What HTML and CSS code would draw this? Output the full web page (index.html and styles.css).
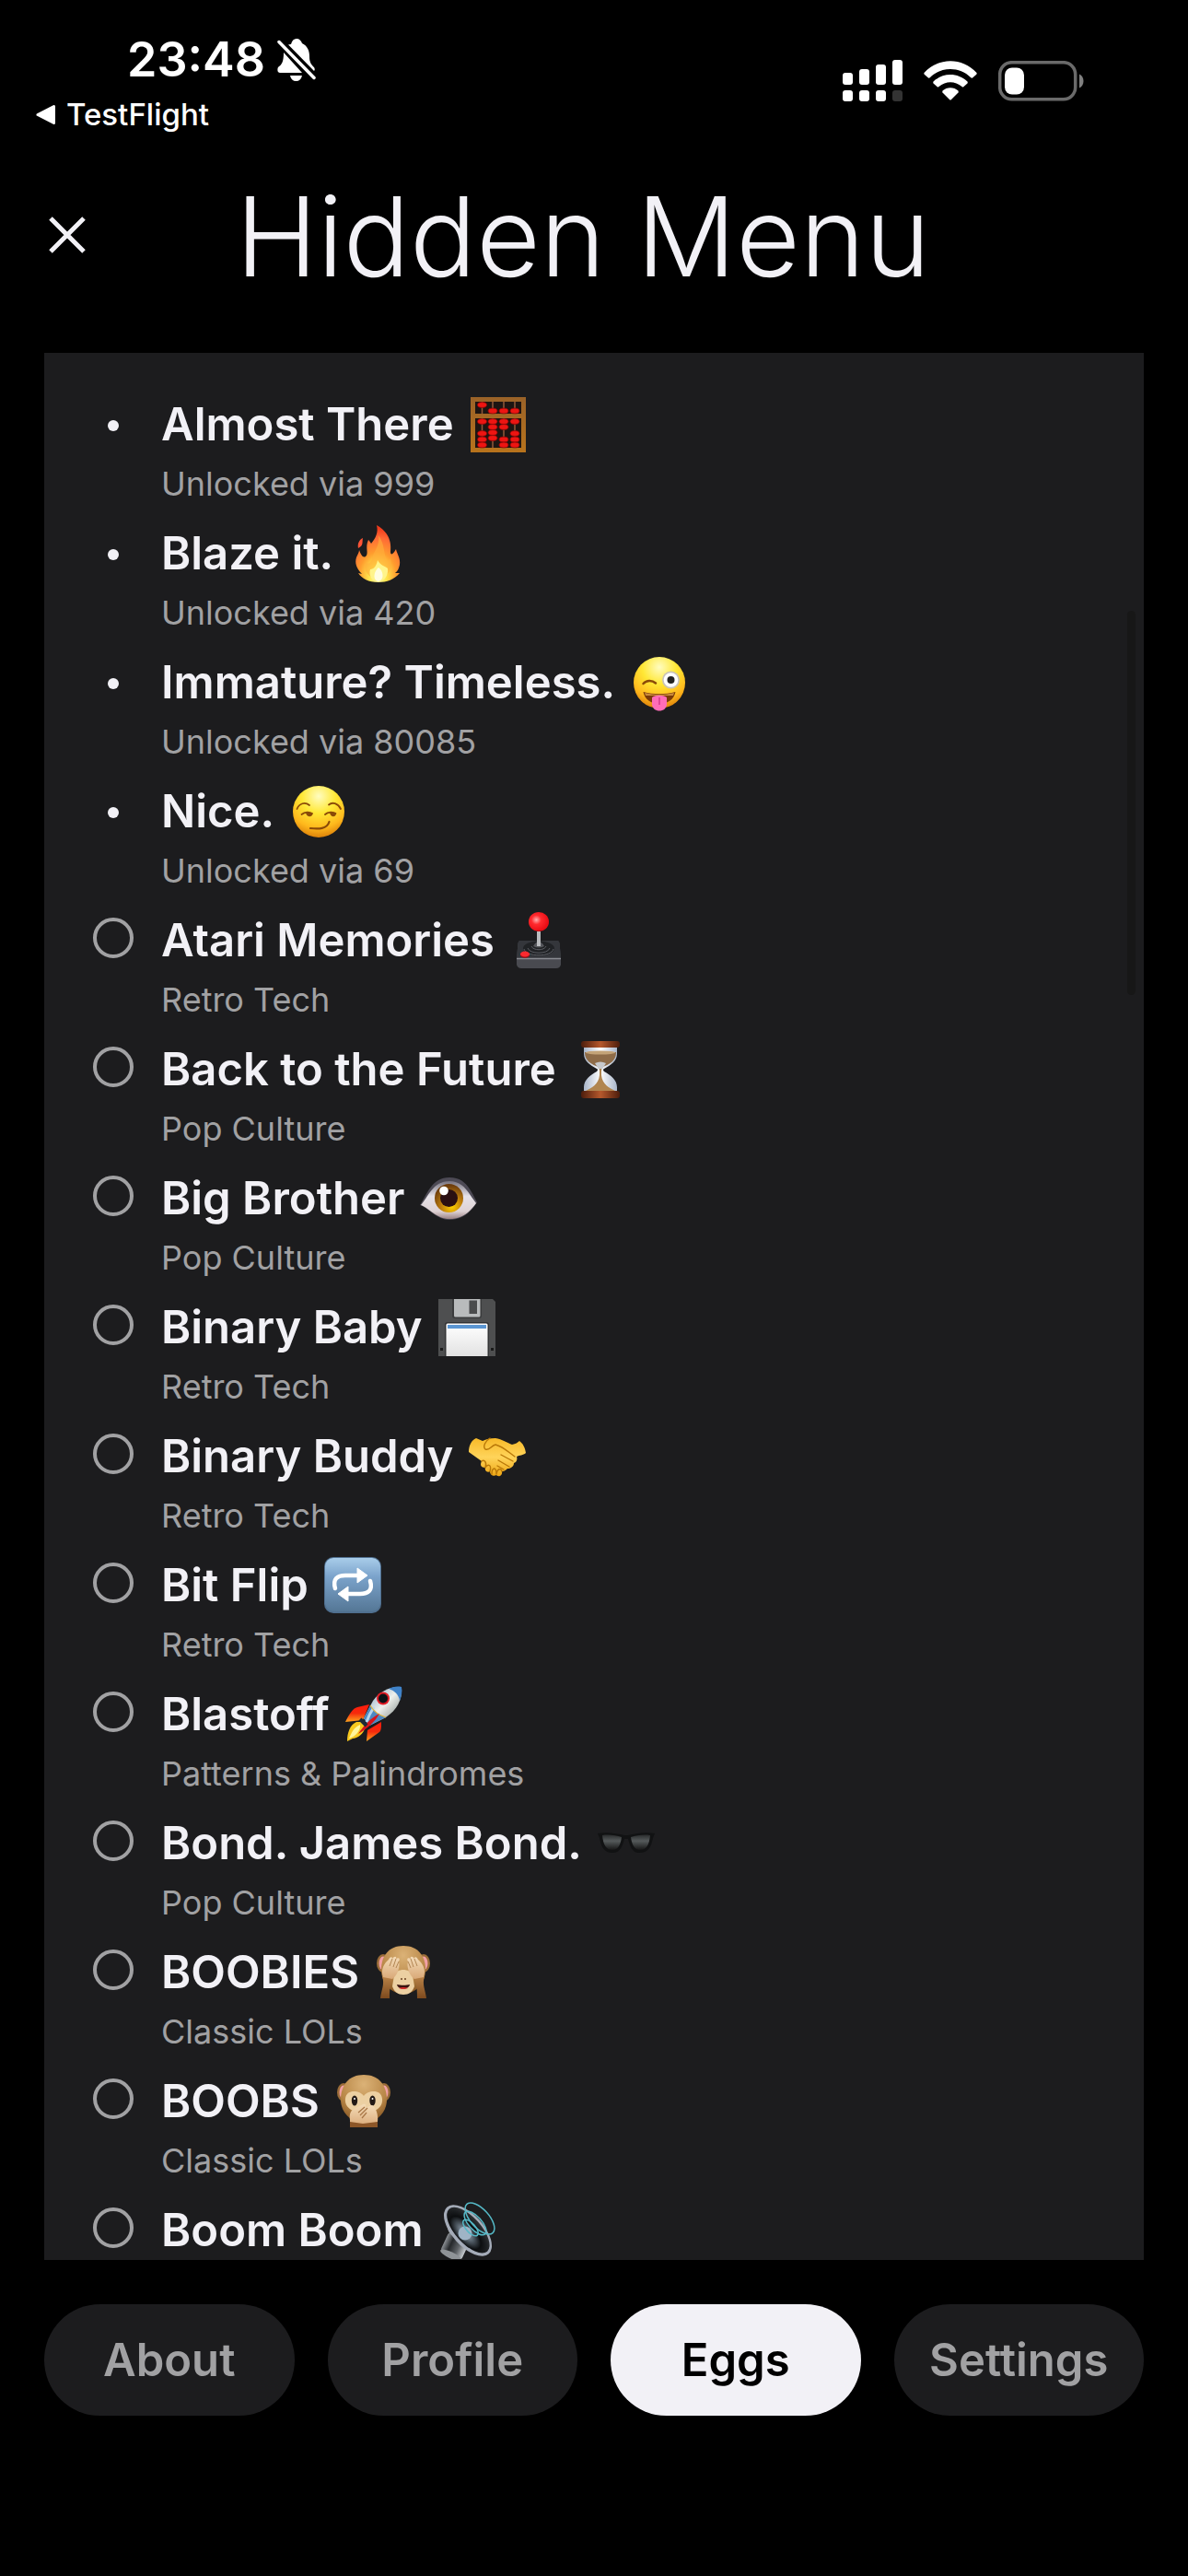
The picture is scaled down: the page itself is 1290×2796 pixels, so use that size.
FILE: index.html
```html
<!DOCTYPE html>
<html lang="en">
<head>
  <meta charset="UTF-8" />
  <meta name="viewport" content="width=device-width, initial-scale=1.0"/>
  <title>Hidden Menu</title>
  <link rel="stylesheet" href="styles.css">
</head>
<body>

  <!-- shared gradients for the emoji drawings -->
  <svg class="defs" width="0" height="0" aria-hidden="true">
    <defs>
      <linearGradient id="wood" x1="0" y1="0" x2="0" y2="1">
        <stop offset="0" stop-color="#9a6228"/><stop offset="1" stop-color="#b8731c"/>
      </linearGradient>
      <radialGradient id="flame" cx="0.5" cy="0.9" r="0.85">
        <stop offset="0" stop-color="#fffbd0"/><stop offset="0.22" stop-color="#ffe94f"/>
        <stop offset="0.5" stop-color="#ff9d2e"/><stop offset="0.8" stop-color="#ff6a35"/><stop offset="1" stop-color="#f03a1c"/>
      </radialGradient>
      <radialGradient id="face" cx="0.5" cy="0.2" r="0.82">
        <stop offset="0" stop-color="#fffcc0"/><stop offset="0.4" stop-color="#ffe836"/>
        <stop offset="0.75" stop-color="#ffb81c"/><stop offset="1" stop-color="#d97c08"/>
      </radialGradient>
      <radialGradient id="ball" cx="0.38" cy="0.4" r="0.6">
        <stop offset="0" stop-color="#ffb0b0"/><stop offset="0.4" stop-color="#ff2a2e"/><stop offset="1" stop-color="#e80c14"/>
      </radialGradient>
      <linearGradient id="cap" x1="0" y1="0" x2="1" y2="0">
        <stop offset="0" stop-color="#4d1d0c"/><stop offset="0.5" stop-color="#b5582c"/><stop offset="1" stop-color="#4d1d0c"/>
      </linearGradient>
      <linearGradient id="glass" x1="0" y1="0" x2="1" y2="0">
        <stop offset="0" stop-color="#a9b6ca"/><stop offset="0.5" stop-color="#ffffff"/><stop offset="1" stop-color="#a9b6ca"/>
      </linearGradient>
      <linearGradient id="sclera" x1="0" y1="0" x2="0" y2="1">
        <stop offset="0" stop-color="#77737f"/><stop offset="0.4" stop-color="#e6e2e8"/><stop offset="0.8" stop-color="#ded2d4"/><stop offset="1" stop-color="#9c8486"/>
      </linearGradient>
      <radialGradient id="iris" cx="0.6" cy="0.8" r="0.75">
        <stop offset="0" stop-color="#ffd000"/><stop offset="0.5" stop-color="#bd7c0c"/><stop offset="1" stop-color="#6d3d0c"/>
      </radialGradient>
      <linearGradient id="paper" x1="0" y1="0" x2="0" y2="1">
        <stop offset="0" stop-color="#ffffff"/><stop offset="1" stop-color="#e2e2e2"/>
      </linearGradient>
      <linearGradient id="skin" x1="0" y1="0" x2="0" y2="1">
        <stop offset="0" stop-color="#f7b928"/><stop offset="0.5" stop-color="#ffd45a"/><stop offset="1" stop-color="#eda514"/>
      </linearGradient>
      <linearGradient id="tile" x1="0" y1="0" x2="0" y2="1">
        <stop offset="0" stop-color="#a9cdea"/><stop offset="0.35" stop-color="#7ba3cb"/><stop offset="1" stop-color="#557796"/>
      </linearGradient>
      <linearGradient id="hull" x1="0" y1="0" x2="1" y2="1">
        <stop offset="0.2" stop-color="#9fb9d0"/><stop offset="0.5" stop-color="#eef0ec"/><stop offset="0.85" stop-color="#8d9693"/>
      </linearGradient>
      <linearGradient id="fin" x1="0" y1="0" x2="0" y2="1">
        <stop offset="0" stop-color="#ff1a0c"/><stop offset="0.5" stop-color="#f52a0c"/><stop offset="1" stop-color="#ffa51e"/>
      </linearGradient>
      <linearGradient id="lens" x1="0" y1="0" x2="0" y2="1">
        <stop offset="0" stop-color="#2b2d2e"/><stop offset="0.4" stop-color="#555a5b"/><stop offset="1" stop-color="#161616"/>
      </linearGradient>
      <radialGradient id="fur" cx="0.5" cy="0.2" r="0.85">
        <stop offset="0" stop-color="#dbb277"/><stop offset="0.6" stop-color="#b98848"/><stop offset="1" stop-color="#80501f"/>
      </radialGradient>
      <linearGradient id="paw" x1="0" y1="0" x2="0" y2="1">
        <stop offset="0" stop-color="#f4dcb8"/><stop offset="1" stop-color="#d9a877"/>
      </linearGradient>
      <linearGradient id="arm" x1="0" y1="0" x2="0" y2="1">
        <stop offset="0" stop-color="#b98348"/><stop offset="1" stop-color="#7d4a1e"/>
      </linearGradient>
      <linearGradient id="metal" x1="0" y1="0" x2="1" y2="0">
        <stop offset="0" stop-color="#8b8f94"/><stop offset="0.3" stop-color="#25282b"/><stop offset="0.65" stop-color="#5d6165"/><stop offset="1" stop-color="#c7cbcf"/>
      </linearGradient>
      <radialGradient id="cone" cx="0.5" cy="0.65" r="0.6">
        <stop offset="0" stop-color="#a9bccd"/><stop offset="0.35" stop-color="#4a545d"/><stop offset="0.6" stop-color="#0c0e10"/><stop offset="1" stop-color="#2a2d30"/>
      </radialGradient>
    </defs>
  </svg>

  <div class="app">

    <div class="status-bar">
      <div class="status-left">
        <div class="clock">
          <span>23:48</span>
          <svg class="bell" viewBox="0 0 42 46" role="img" aria-label="Silent mode">
            <path fill="#fff" d="M15 6C16 2 18 0 21 0C24 0 26 2 27 5C33 8 35 13 35 19C35 26 37 28 40 31C41 33 41 34 40 35L12 6.500Z"/>
            <path fill="#fff" d="M7 15L27 37H3C0 37 0 33 1 31C5 28 7 25 7 15Z"/>
            <path fill="#fff" d="M14 40H27C26 44 24 46 20.500 46C17 46 15 44 14 40Z"/>
            <path d="M1.500 3L40.500 43" stroke="#000" stroke-width="7"/>
            <path d="M2 3.500L40 42.500" stroke="#fff" stroke-width="3.500" stroke-linecap="round"/>
          </svg>
        </div>
        <a class="back" href="#">
          <svg class="back-arrow" viewBox="0 0 21 23" aria-hidden="true">
            <path fill="#fff" stroke="#fff" stroke-width="3" stroke-linejoin="round" d="M2 11.500L19.500 2.500V20.500Z"/>
          </svg>
          <span>TestFlight</span>
        </a>
      </div>
      <div class="status-right">
        <svg class="signal" viewBox="0 0 65 45" role="img" aria-label="Signal">
          <g fill="#fff">
            <rect x="0" y="14" width="11" height="13" rx="3"/>
            <rect x="18" y="10" width="11" height="17" rx="3"/>
            <rect x="36" y="5" width="11" height="22" rx="3"/>
            <rect x="54" y="0" width="11" height="27" rx="3"/>
            <rect x="0" y="33" width="11" height="12" rx="3"/>
            <rect x="18" y="33" width="11" height="12" rx="3"/>
            <rect x="36" y="33" width="11" height="12" rx="3"/>
          </g>
          <rect x="54" y="33" width="11" height="12" rx="3" fill="#333"/>
        </svg>
        <svg class="wifi" viewBox="0 0 58 43" role="img" aria-label="Wi-Fi">
          <g fill="#fff">
            <path d="M0.500 13C16 -4 42 -4 57.500 13Q58 14 57 15L53 18.500Q52 19 51 18C39 6 19 6 7 18Q6 19 5 18.500L1 15Q0 14 0.500 13Z"/>
            <path d="M10.500 22.500C21 12.500 37 12.500 47.500 22.500Q48 23.500 47.500 24.500L43.500 28Q42.500 29 41.500 28C34 21.500 24 21.500 16.500 28Q15.500 29 14.500 28L10.500 24.500Q10 23.500 10.500 22.500Z"/>
            <path d="M20.500 32.500C25 28 33 28 37.500 32.500Q38 33.500 37.500 34.500L30 42Q29 43 28 42L20.500 34.500Q20 33.500 20.500 32.500Z"/>
          </g>
        </svg>
        <svg class="battery" viewBox="0 0 94 44" role="img" aria-label="Battery">
          <rect x="1.700" y="1.700" width="82" height="40" rx="13" fill="none" stroke="#6a6a6a" stroke-width="3.500"/>
          <rect x="7" y="7.500" width="21" height="29" rx="8" fill="#fff"/>
          <path d="M88 14.500C94 17 94 27 88 29.500Z" fill="#808080"/>
        </svg>
      </div>
    </div>

    <header class="header">
      <button class="close" type="button" aria-label="Close">
        <svg class="close-icon" viewBox="0 0 40 40" aria-hidden="true">
          <path d="M2 2L38 38M38 2L2 38" stroke="#f2f1f6" stroke-width="5"/>
        </svg>
      </button>
      <h1>Hidden Menu</h1>
    </header>

    <main class="panel">
      <ul class="eggs">
        <li class="egg">
          <span class="dot"></span>
          <div class="egg-text">
            <div class="egg-title">
              <span>Almost There</span>
              <svg class="emoji" viewBox="-1 -1 62 62" role="img" aria-label="abacus">
                <rect x="0" y="0" width="60" height="60" fill="url(#wood)"/>
                <rect x="5" y="5" width="50" height="13" fill="#1d1512"/>
                <rect x="5" y="23" width="50" height="32" fill="#1d1512"/>
                <path d="M12.500 5V18M24 5V18M36 5V18M48 5V18M12.500 23V55M24 23V55M36 23V55M48 23V55" stroke="#93583a" stroke-width="1.500"/>
                <g fill="#ee1512" stroke="#8c0505" stroke-width="0.800">
                  <ellipse cx="12.500" cy="8.500" rx="5" ry="2.900"/><ellipse cx="24" cy="15" rx="5" ry="2.900"/><ellipse cx="36" cy="15" rx="5" ry="2.900"/><ellipse cx="48" cy="15" rx="5" ry="2.900"/>
                  <ellipse cx="12.500" cy="26.500" rx="5" ry="2.900"/><ellipse cx="12.500" cy="39.500" rx="5" ry="2.900"/><ellipse cx="12.500" cy="46" rx="5" ry="2.900"/><ellipse cx="12.500" cy="52" rx="5" ry="2.900"/>
                  <ellipse cx="24" cy="26.500" rx="5" ry="2.900"/><ellipse cx="24" cy="32.500" rx="5" ry="2.900"/><ellipse cx="24" cy="38.500" rx="5" ry="2.900"/><ellipse cx="24" cy="44.500" rx="5" ry="2.900"/>
                  <ellipse cx="36" cy="26.500" rx="5" ry="2.900"/><ellipse cx="36" cy="32.500" rx="5" ry="2.900"/><ellipse cx="36" cy="46" rx="5" ry="2.900"/><ellipse cx="36" cy="52" rx="5" ry="2.900"/>
                  <ellipse cx="48" cy="26.500" rx="5" ry="2.900"/><ellipse cx="48" cy="39.500" rx="5" ry="2.900"/><ellipse cx="48" cy="46" rx="5" ry="2.900"/><ellipse cx="48" cy="52" rx="5" ry="2.900"/>
                </g>
              </svg>
            </div>
            <div class="egg-note">Unlocked via 999</div>
          </div>
        </li>
        <li class="egg">
          <span class="dot"></span>
          <div class="egg-text">
            <div class="egg-title">
              <span>Blaze it.</span>
              <svg class="emoji" viewBox="-1 -1 62 62" role="img" aria-label="fire">
                <path fill="#ff5436" d="M14 13C13 18 15 21 9 24C8 19 10 15 14 13Z"/>
                <path fill="url(#flame)" d="M29 -1C38 4 46 13 44 28C44 32 47 31 50 25C51 30 55 35 54 42C53 46 52 49 49 51L54 51C48 58 40 61 31 61C20 61 13 57 9 51L13 52C7 46 5 40 7 34C8 31 10 29 10 26C12 31 14 35 17 33C21 30 16 23 20 15C21 16 22 17 23 19C28 13 31 7 29 -1Z"/>
                <path fill="#ffb13c" opacity="0.6" d="M31 10C38 20 36 28 40 37C41 38 43 37 44 35C46 45 43 55 31 57C20 57 14 48 17 39C20 42 23 40 24 36C24 30 33 22 31 10Z"/>
                <path fill="#fff48a" d="M30 37C33 43 38 43 41 46C42 54 37 60 31 60C24 60 20 54 22 47C26 47 29 43 30 37Z"/>
                <path fill="#fffde0" d="M31 45C36 48 38 58 31 60C24 59 26 49 31 45Z"/>
              </svg>
            </div>
            <div class="egg-note">Unlocked via 420</div>
          </div>
        </li>
        <li class="egg">
          <span class="dot"></span>
          <div class="egg-text">
            <div class="egg-title">
              <span>Immature? Timeless.</span>
              <svg class="emoji" viewBox="-1 -1 62 62" role="img" aria-label="winking face with tongue">
                <circle cx="30" cy="30" r="28" fill="url(#face)"/>
                <path d="M12.500 31C16 27 22 27 26 30.500" fill="none" stroke="#8a4a08" stroke-width="2.500" stroke-linecap="round"/>
                <circle cx="42.500" cy="27" r="9.500" fill="#c9c3b8"/>
                <circle cx="42.500" cy="27" r="7.800" fill="#fff"/>
                <circle cx="42.500" cy="27" r="4" fill="#222"/>
                <path d="M12.500 40C24 43 36 43 47.500 40C46 48 39 53 30 53C21 53 14 48 12.500 40Z" fill="#7a3a08"/>
                <path d="M14 41C24 43.500 36 43.500 46 41L45 44H15Z" fill="#c98a3c"/>
                <path d="M22 46C26 43 34 43 38 46V53C38 63 22 63 22 53Z" fill="#ff6db8"/>
                <path d="M30 46V54" stroke="#d63a8a" stroke-width="1.500"/>
              </svg>
            </div>
            <div class="egg-note">Unlocked via 80085</div>
          </div>
        </li>
        <li class="egg">
          <span class="dot"></span>
          <div class="egg-text">
            <div class="egg-title">
              <span>Nice.</span>
              <svg class="emoji" viewBox="-1 -1 62 62" role="img" aria-label="smirking face">
                <circle cx="30" cy="30" r="28" fill="url(#face)"/>
                <g fill="none" stroke="#8a4a08" stroke-linecap="round">
                  <path d="M6.500 27C9 21 15 19 20 23" stroke-width="1.800"/>
                  <path d="M41 22.500C45 19 51 21 54 27" stroke-width="1.800"/>
                  <path d="M11.500 33C15 30 20 30 23 32" stroke-width="1.800"/>
                  <path d="M37 33C40 30 46 30 48.500 32" stroke-width="1.800"/>
                  <path d="M21 48C30 49 39 49 41.500 41" stroke-width="2.200"/>
                </g>
                <path d="M16 31C19 30.500 22 31 23.500 32C23 36.500 17 36.500 16 31Z" fill="#8a4a08"/>
                <path d="M42 31C45 30.500 47 31 49 32C48.500 36.500 43 36.500 42 31Z" fill="#8a4a08"/>
              </svg>
            </div>
            <div class="egg-note">Unlocked via 69</div>
          </div>
        </li>
        <li class="egg">
          <input class="ring" type="checkbox" id="atari">
          <div class="egg-text">
            <label class="egg-title" for="atari">
              <span>Atari Memories</span>
              <svg class="emoji" viewBox="-1 -1 62 62" role="img" aria-label="joystick">
                <path d="M10 30H50Q52 30 52.500 33L54 49V56Q53 60 49 60H11Q7 60 6 56V49L7.500 33Q8 30 10 30Z" fill="#494a50"/>
                <path d="M10 30H50Q52 30 52.500 33L54 49H6L7.500 33Q8 30 10 30Z" fill="#34363b"/>
                <path d="M6 49.500H54" stroke="#8a8c92" stroke-width="1.500"/>
                <ellipse cx="30" cy="38.500" rx="17" ry="8" fill="#202225"/>
                <path d="M14 39C16 48 44 48 46 39M18 38C20 45 40 45 42 38M22 36C24 41 36 41 38 36" fill="none" stroke="#5a5c62" stroke-width="1"/>
                <path d="M24 36Q30 26 36 36Q30 39 24 36Z" fill="#55575c"/>
                <rect x="28" y="20" width="4" height="16" fill="#b9bbbe"/>
                <ellipse cx="30" cy="9.500" rx="11" ry="10.500" fill="url(#ball)"/>
                <ellipse cx="15" cy="45.500" rx="5" ry="3.300" fill="#a80a12"/>
                <ellipse cx="15" cy="44.500" rx="5" ry="3" fill="#fa2a30"/>
              </svg>
            </label>
            <div class="egg-note">Retro Tech</div>
          </div>
        </li>
        <li class="egg">
          <input class="ring" type="checkbox" id="future">
          <div class="egg-text">
            <label class="egg-title" for="future">
              <span>Back to the Future</span>
              <svg class="emoji" viewBox="-1 -1 62 62" role="img" aria-label="hourglass">
                <path d="M12 5H48V13C48 21 41 25 34 29Q32 30 34 32C41 36 48 41 48 49V54H12V49C12 41 19 36 26 32Q28 30 26 29C19 25 12 21 12 13Z" fill="url(#glass)"/>
                <path d="M13 11H47C47 20 41 24 30 28C19 24 13 20 13 11Z" fill="#8e6c48"/>
                <ellipse cx="30" cy="11.500" rx="16" ry="2" fill="#c4a478"/>
                <path d="M24 23Q30 20 36 23L31 31H29Z" fill="#c7c9cb"/>
                <path d="M14 53C20 50 28 46 29 36V29H31V36C32 46 40 50 46 53Z" fill="#b18650"/>
                <rect x="9" y="-1" width="42" height="7" rx="3" fill="url(#cap)"/>
                <rect x="9" y="53" width="42" height="8" rx="3" fill="url(#cap)"/>
              </svg>
            </label>
            <div class="egg-note">Pop Culture</div>
          </div>
        </li>
        <li class="egg">
          <input class="ring" type="checkbox" id="brother">
          <div class="egg-text">
            <label class="egg-title" for="brother">
              <span>Big Brother</span>
              <svg class="emoji" viewBox="-1 -1 62 62" role="img" aria-label="eye">
                <path d="M-1 37C7 25 12 7 31 7C49 7 54 21 61 34C54 45 45 53 31 53C17 53 10 41 -1 37Z" fill="#4d4a55"/>
                <path d="M0 37C8 28 13 11 31 11C47 11 52 25 60 35C53 45 44 52 31 52C17 52 10 41 0 37Z" fill="url(#sclera)"/>
                <circle cx="30.500" cy="29.500" r="15.500" fill="url(#iris)"/>
                <circle cx="30.500" cy="29.500" r="9.500" fill="#2a0f12"/>
                <circle cx="25" cy="21.500" r="4.800" fill="#fff"/>
              </svg>
            </label>
            <div class="egg-note">Pop Culture</div>
          </div>
        </li>
        <li class="egg">
          <input class="ring" type="checkbox" id="baby">
          <div class="egg-text">
            <label class="egg-title" for="baby">
              <span>Binary Baby</span>
              <svg class="emoji" viewBox="-1 -1 62 62" role="img" aria-label="floppy disk">
                <path d="M-1 -1H58L61 2V61H-1Z" fill="#4e4f50"/>
                <path d="M14 -1H46V17Q46 20 43 20H17Q14 20 14 17Z" fill="#3a3b3c"/>
                <path d="M16 -1H44.500V17Q44.500 18.500 43 18.500H17.500Q16 18.500 16 17Z" fill="#b9bbbc"/>
                <rect x="32.500" y="0.500" width="8.500" height="14.500" fill="#4a4b4c"/>
                <path d="M6 61V27Q6 24 9 24H51Q54 24 54 27V61Z" fill="#343536"/>
                <path d="M7.500 61V27Q7.500 25.500 9 25.500H51Q52.500 25.500 52.500 27V61Z" fill="url(#paper)"/>
                <rect x="9" y="27" width="42" height="4" fill="#5b96d2"/>
                <rect x="1" y="52" width="3" height="3" fill="#1a1a1a"/><rect x="56" y="52" width="3" height="3" fill="#1a1a1a"/>
              </svg>
            </label>
            <div class="egg-note">Retro Tech</div>
          </div>
        </li>
        <li class="egg">
          <input class="ring" type="checkbox" id="buddy">
          <div class="egg-text">
            <label class="egg-title" for="buddy">
              <span>Binary Buddy</span>
              <svg class="emoji" viewBox="-1 -1 62 62" role="img" aria-label="handshake">
                <path d="M-1 25C-1 18 2 12 7 10L14 13C18 11 22 10 28 10C35 11 41 15 46 17C50 16 52 15 54 13C58 16 60 20 61 26C58 29 54 28 51 30C52 33 51 36 48 37C48 41 44 43 41 43C38 46 36 46 35 46C36 52 30 52 29 50C26 52 22 50 22 46C19 48 16 45 17 42C12 42 11 39 13 35Z" fill="url(#skin)"/>
                <g fill="none" stroke="#b97808" stroke-width="1.400" stroke-linecap="round">
                  <path d="M22 10C17 13 14 19 17 22C22 24 23 18 28 17C36 19 42 25 49 30"/>
                  <path d="M34 28L47 35M31 34L43 41M30 40L37 44"/>
                  <path d="M13 35C16 33 19 36 17 42M17 42C20 37 24 39 22 46M24 49C24 42 29 40 29 49M29 49C30 43 34 42 35 46"/>
                </g>
              </svg>
            </label>
            <div class="egg-note">Retro Tech</div>
          </div>
        </li>
        <li class="egg">
          <input class="ring" type="checkbox" id="flip">
          <div class="egg-text">
            <label class="egg-title" for="flip">
              <span>Bit Flip</span>
              <svg class="emoji" viewBox="-1 -1 62 62" role="img" aria-label="repeat">
                <rect x="-1" y="-1" width="62" height="61" rx="10" fill="#4f6f8f"/>
                <rect x="0" y="0" width="60" height="58" rx="9" fill="url(#tile)"/>
                <g fill="none" stroke="#fff" stroke-width="4.500" stroke-linecap="round">
                  <path d="M11 33C8 23 13 19 22 19H38"/>
                  <path d="M49 25C52 35 47 39 38 39H22"/>
                </g>
                <path d="M35 11L46 19L35 27ZM25 31L14 39L25 47Z" fill="#fff" stroke="#fff" stroke-width="1" stroke-linejoin="round"/>
              </svg>
            </label>
            <div class="egg-note">Retro Tech</div>
          </div>
        </li>
        <li class="egg">
          <input class="ring" type="checkbox" id="blastoff">
          <div class="egg-text">
            <label class="egg-title" for="blastoff">
              <span>Blastoff</span>
              <svg class="emoji" viewBox="-1 -1 62 62" role="img" aria-label="rocket">
                <path d="M-1 38C3 30 7 23 12 22L25 19L18 36Z" fill="url(#fin)"/>
                <path d="M22 59L23 47L38 38C38 44 38 47 36 49Z" fill="url(#fin)"/>
                <path d="M1 59C1 50 4 41 11 38H17L21 43C19 51 12 56 7 56Z" fill="#f7c81e"/>
                <path d="M3 56C6 49 8 44 15 41C16 47 10 54 3 56Z" fill="#fff59a"/>
                <path d="M60 0C48 -1 36 5 29 15L19 34L25 42L43 33C55 25 61 14 60 0Z" fill="url(#hull)"/>
                <path d="M60 0C55 -1 50 0 46 2C53 4 57 9 58 15C60 10 61 5 60 0Z" fill="#3f82c8"/>
                <path d="M26 20L19 34L25 42L43 33C36 31 30 27 26 20Z" fill="#4d88c2"/>
                <path d="M30 22C26 28 24 32 22 38" stroke="#b7d6ee" stroke-width="3" fill="none"/>
                <path d="M26 20C30 27 36 31 43 33" fill="none" stroke="#e0b33c" stroke-width="1.200"/>
                <path d="M13 51C18 43 26 34 36 29C31 38 23 45 13 51Z" fill="#d8141a"/>
                <circle cx="40" cy="12.500" r="7" fill="#e01b24"/>
                <circle cx="40" cy="12.500" r="5" fill="#0d1216"/>
                <path d="M15 35L22 42" stroke="#1d2a36" stroke-width="4"/>
              </svg>
            </label>
            <div class="egg-note">Patterns &amp; Palindromes</div>
          </div>
        </li>
        <li class="egg">
          <input class="ring" type="checkbox" id="bond">
          <div class="egg-text">
            <label class="egg-title" for="bond">
              <span>Bond. James Bond.</span>
              <svg class="emoji" viewBox="-1 -1 62 62" role="img" aria-label="sunglasses">
                <path d="M-1 19C9 17 20 19 28 21H32C40 19 51 17 61 19L59 24C57 34 54 40 44 40C36 40 34 32 32 25H28C26 32 24 40 15 40C6 40 3 34 1 24Z" fill="#111213"/>
                <path d="M4 21C11 20 19 21 25 23C24 31 21 37 15 37C8 37 5 31 4 21Z" fill="url(#lens)"/>
                <path d="M56 21C49 20 41 21 35 23C36 31 39 37 45 37C52 37 55 31 56 21Z" fill="url(#lens)"/>
              </svg>
            </label>
            <div class="egg-note">Pop Culture</div>
          </div>
        </li>
        <li class="egg">
          <input class="ring" type="checkbox" id="boobies">
          <div class="egg-text">
            <label class="egg-title" for="boobies">
              <span>BOOBIES</span>
              <svg class="emoji" viewBox="-1 -1 62 62" role="img" aria-label="see-no-evil monkey">
                <ellipse cx="8" cy="20" rx="7" ry="10" fill="#9a6c38"/><ellipse cx="52" cy="20" rx="7" ry="10" fill="#9a6c38"/>
                <ellipse cx="8" cy="20" rx="4.500" ry="7.500" fill="#f2a0a6"/><ellipse cx="52" cy="20" rx="4.500" ry="7.500" fill="#f2a0a6"/>
                <path d="M30 1C46 1 54 12 54 27C54 40 45 53 30 53C15 53 6 40 6 27C6 12 14 1 30 1Z" fill="url(#fur)"/>
                <path d="M20 33C23 25 37 25 40 33L42 45C40 51 36 54 30 54C24 54 20 51 18 45Z" fill="#ecd0a2"/>
                <path d="M23 43C27 44 33 44 37 43C36 49 24 49 23 43Z" fill="#3a1410"/>
                <path d="M25 47Q30 45 35 47Q30 49 25 47Z" fill="#d82a2a"/>
                <circle cx="28" cy="37" r="1" fill="#6b4420"/><circle cx="32" cy="37" r="1" fill="#6b4420"/>
                <path d="M7 34L19 36C15 43 15 50 15 58H5C6 49 10 43 7 34Z" fill="url(#arm)"/>
                <path d="M53 34L41 36C45 43 45 50 45 58H55C54 49 50 43 53 34Z" fill="url(#arm)"/>
                <path d="M8 35C5 27 9 20 14 16C15 13 18 12 18 15C20 12 23 12 22 15C25 13 27 15 25 18C27 24 23 34 18 37Z" fill="url(#paw)"/>
                <path d="M52 35C55 27 51 20 46 16C45 13 42 12 42 15C40 12 37 12 38 15C35 13 33 15 35 18C33 24 37 34 42 37Z" fill="url(#paw)"/>
                <path d="M18 15L15 23M22 15L19 24M25 18L22 25M42 15L45 23M38 15L41 24M35 18L38 25" stroke="#b28654" stroke-width="1" fill="none"/>
              </svg>
            </label>
            <div class="egg-note">Classic LOLs</div>
          </div>
        </li>
        <li class="egg">
          <input class="ring" type="checkbox" id="boobs">
          <div class="egg-text">
            <label class="egg-title" for="boobs">
              <span>BOOBS</span>
              <svg class="emoji" viewBox="-1 -1 62 62" role="img" aria-label="speak-no-evil monkey">
                <ellipse cx="8" cy="20" rx="7" ry="10" fill="#9a6c38"/><ellipse cx="52" cy="20" rx="7" ry="10" fill="#9a6c38"/>
                <ellipse cx="8" cy="20" rx="4.500" ry="7.500" fill="#f2a0a6"/><ellipse cx="52" cy="20" rx="4.500" ry="7.500" fill="#f2a0a6"/>
                <path d="M30 1C46 1 55 12 55 28C55 41 45 53 30 53C15 53 5 41 5 28C5 12 14 1 30 1Z" fill="url(#fur)"/>
                <path d="M30 24C34 18 49 16 50 27C51 36 43 42 30 42C17 42 9 36 10 27C11 16 26 18 30 24Z" fill="#ecd0a2"/>
                <ellipse cx="20" cy="29" rx="3.200" ry="5.500" fill="#221a16"/><ellipse cx="39.500" cy="29" rx="3.200" ry="5.500" fill="#221a16"/>
                <circle cx="20" cy="27" r="1" fill="#fff"/><circle cx="39.500" cy="27" r="1" fill="#fff"/>
                <path d="M45 58V52C46 44 43 36 39 34C31 36 25 44 27 50L29 58Z" fill="url(#paw)"/>
                <path d="M15 58V50C14 44 16 39 20 38L29 33C32 32 33 34 31 36L34 36C36 37 35 39 33 41C35 42 34 45 32 47L29 58Z" fill="url(#paw)"/>
                <path d="M31 36L24 42M34 37L26 45M33 42L28 48" stroke="#a87646" stroke-width="1.200"/>
                <path d="M15 52L29 54V58H15ZM29 54L45 52V58H29Z" fill="#8c5628"/>
              </svg>
            </label>
            <div class="egg-note">Classic LOLs</div>
          </div>
        </li>
        <li class="egg">
          <input class="ring" type="checkbox" id="boom">
          <div class="egg-text">
            <label class="egg-title" for="boom">
              <span>Boom Boom</span>
              <svg class="emoji" viewBox="-1 -1 62 62" role="img" aria-label="speaker">
                <g transform="rotate(25 14 48)">
                  <rect x="3" y="35" width="25" height="22" rx="3" fill="url(#metal)"/>
                  <ellipse cx="15.500" cy="57" rx="12.500" ry="3.500" fill="#8f9397"/>
                </g>
                <path d="M6 12C7 26 8 33 14 36L28 49C36 54 44 56 50 54Z" fill="#9da2a8"/>
                <g transform="rotate(48 30 30)">
                  <ellipse cx="30" cy="30" rx="34" ry="17" fill="#a4abb8"/>
                  <ellipse cx="30" cy="29.500" rx="31" ry="14" fill="url(#cone)"/>
                </g>
                <circle cx="27" cy="33" r="7.500" fill="#9fb4c6"/>
                <g fill="none" stroke="#55b8c6" stroke-width="1.500">
                  <ellipse cx="43" cy="17" rx="21" ry="10" transform="rotate(48 43 17)"/>
                  <ellipse cx="38" cy="22" rx="16" ry="7" transform="rotate(48 38 22)"/>
                  <ellipse cx="33" cy="27" rx="11" ry="5" transform="rotate(48 33 27)"/>
                </g>
              </svg>
            </label>
          </div>
        </li>
      </ul>
      <div class="scroll-thumb"></div>
    </main>

    <nav class="tabs">
      <button class="tab" type="button">About</button>
      <button class="tab" type="button">Profile</button>
      <button class="tab active" type="button">Eggs</button>
      <button class="tab" type="button">Settings</button>
    </nav>

  </div>

</body>
</html>
```
FILE: styles.css
```css
* {
  box-sizing: border-box;
}

body {
  margin: 0;
  background-color: #000;
  color: #f2f1f6;
  font-family: Inter, "Liberation Sans", sans-serif;
}

.defs {
  position: absolute;
}

.app {
  height: 100vh;
  display: flex;
  flex-direction: column;
}

/* status bar */

.status-bar {
  display: flex;
  justify-content: space-between;
  align-items: flex-start;
  padding: 35px 112px 0 39px;
  color: #fff;
}

.clock {
  display: flex;
  align-items: center;
  gap: 13px;
  margin-left: 99px;
  font-size: 52px;
  line-height: 60px;
  font-weight: 600;
}

.bell {
  width: 42px;
  height: 46px;
}

.back {
  display: flex;
  align-items: center;
  gap: 12px;
  margin-top: 9px;
  color: #fff;
  font-size: 33px;
  line-height: 40px;
  font-weight: 500;
  text-decoration: none;
}

.back-arrow {
  width: 21px;
  height: 23px;
}

.status-right {
  display: flex;
  align-items: center;
  gap: 23px;
  margin-top: 30px;
}

.signal {
  width: 65px;
  height: 45px;
}

.wifi {
  width: 58px;
  height: 43px;
}

.battery {
  width: 94px;
  height: 44px;
}

/* header */

.header {
  display: grid;
  grid-template-columns: 52px 1fr 76px;
  align-items: center;
  padding: 43px 48px 56px;
}

.header h1 {
  margin: 0;
  font-size: 120px;
  line-height: 140px;
  font-weight: 300;
  text-align: center;
  white-space: nowrap;
}

.close {
  padding: 0 0 4px 5px;
  border: none;
  background: none;
  cursor: pointer;
}

.close-icon {
  display: block;
  width: 40px;
  height: 40px;
}

/* list */

.panel {
  position: relative;
  flex: 1;
  min-height: 0;
  margin: 0 48px;
  padding: 46px 53px 0;
  background-color: #1c1c1e;
  overflow: hidden;
}

.eggs {
  display: flex;
  flex-direction: column;
  gap: 22px;
  margin: 0;
  padding: 0;
  list-style: none;
}

.egg {
  display: flex;
  gap: 30px;
}

.dot {
  width: 12px;
  height: 12px;
  margin: 27px 16px 0;
  border-radius: 50%;
  background-color: #f2f1f6;
}

.ring {
  appearance: none;
  width: 44px;
  height: 44px;
  margin: 7px 0 0;
  border: 4px solid #a1a1a3;
  border-radius: 50%;
}

.ring:checked {
  background-color: #a1a1a3;
}

.egg-title {
  display: flex;
  align-items: center;
  gap: 17px;
  font-size: 49px;
  line-height: 64px;
  font-weight: 600;
}

.emoji {
  width: 62px;
  height: 62px;
}

.egg-note {
  margin-top: 10px;
  color: #a1a1a3;
  font-size: 36px;
  line-height: 44px;
}

.scroll-thumb {
  position: absolute;
  top: 280px;
  right: 9px;
  width: 9px;
  height: 417px;
  border-radius: 5px;
  background-color: #171717;
}

/* bottom tabs */

.tabs {
  display: grid;
  grid-template-columns: repeat(4, 1fr);
  gap: 36px;
  padding: 48px 48px 174px;
}

.tab {
  height: 121px;
  padding: 0;
  border: none;
  border-radius: 61px;
  background-color: #1c1c1e;
  color: #a1a1a3;
  font-family: inherit;
  font-size: 49px;
  font-weight: 600;
  cursor: pointer;
}

.tab.active {
  background-color: #f2f1f6;
  color: #000;
}
```
